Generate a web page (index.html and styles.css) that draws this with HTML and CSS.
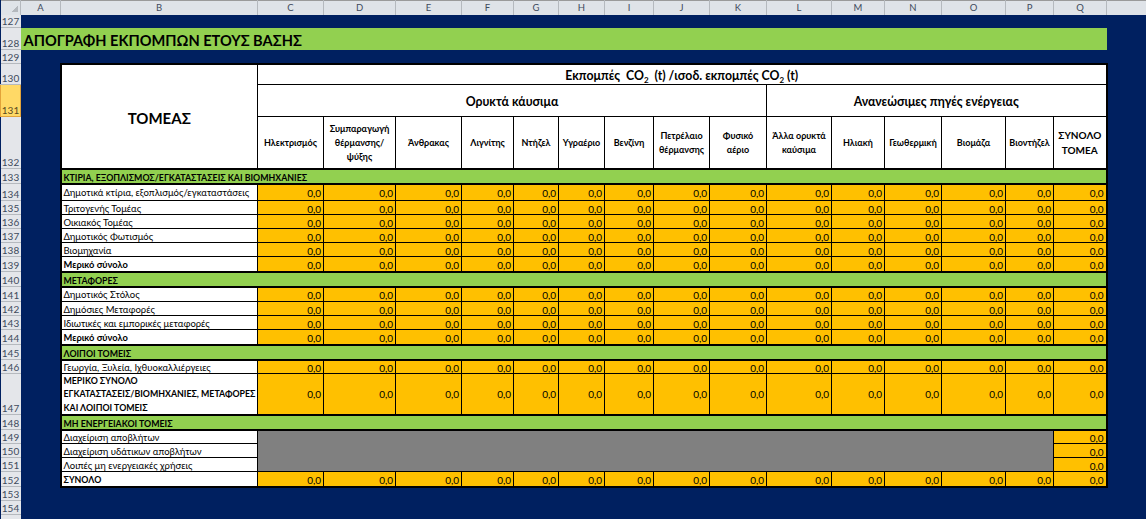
FILE: index.html
```html
<!DOCTYPE html>
<html lang="el">
<head>
<meta charset="utf-8">
<title>Απογραφή εκπομπών</title>
<link rel="stylesheet" href="styles.css">
</head>
<body>
<table class="sheet">
<colgroup><col class="w20"><col class="w40"><col class="w197"><col class="w66"><col class="w72"><col class="w66"><col class="w52"><col class="w45"><col class="w46"><col class="w49"><col class="w56"><col class="w57"><col class="w65"><col class="w53"><col class="w57"><col class="w64"><col class="w48"><col class="w53"><col class="w40"></colgroup>
<tr class="h14"><th class="corner"></th><th class="ch">A</th><th class="ch">B</th><th class="ch">C</th><th class="ch">D</th><th class="ch">E</th><th class="ch">F</th><th class="ch">G</th><th class="ch">H</th><th class="ch">I</th><th class="ch">J</th><th class="ch">K</th><th class="ch">L</th><th class="ch">M</th><th class="ch">N</th><th class="ch">O</th><th class="ch">P</th><th class="ch">Q</th><th class="ch"></th></tr>
<tr class="h13"><th class="rh">127</th><td colspan="18"></td></tr>
<tr class="h22"><th class="rh">128</th><td colspan="17" class="banner">ΑΠΟΓΡΑΦΗ ΕΚΠΟΜΠΩΝ ΕΤΟΥΣ ΒΑΣΗΣ</td><td></td></tr>
<tr class="h14"><th class="rh">129</th><td colspan="18"></td></tr>
<tr class="h21"><th class="rh">130</th><td></td><td rowspan="3" class="sector">ΤΟΜΕΑΣ</td><td colspan="15" class="unit br">Εκπομπές&nbsp; CO<sub>2</sub>&nbsp; (t) /ισοδ. εκπομπές CO<sub>2</sub> (t)</td><td></td></tr>
<tr class="h32"><th class="rh sel">131</th><td></td><td colspan="9" class="group">Ορυκτά κάυσιμα</td><td colspan="6" class="group br">Ανανεώσιμες πηγές ενέργειας</td><td></td></tr>
<tr class="h52"><th class="rh">132</th><td></td><td class="fuel">Ηλεκτρισμός</td><td class="fuel">Συμπαραγωγή<br>θέρμανσης/<br>ψύξης</td><td class="fuel">Άνθρακας</td><td class="fuel">Λιγνίτης</td><td class="fuel">Ντήζελ</td><td class="fuel">Υγραέριο</td><td class="fuel">Βενζίνη</td><td class="fuel">Πετρέλαιο<br>θέρμανσης</td><td class="fuel">Φυσικό<br>αέριο</td><td class="fuel">Άλλα ορυκτά<br>καύσιμα</td><td class="fuel">Ηλιακή</td><td class="fuel">Γεωθερμική</td><td class="fuel">Βιομάζα</td><td class="fuel">Βιοντήζελ</td><td class="fuel total br">ΣΥΝΟΛΟ<br>ΤΟΜΕΑ</td><td></td></tr>
<tr class="h15"><th class="rh">133</th><td></td><td colspan="16" class="section">ΚΤΙΡΙΑ, ΕΞΟΠΛΙΣΜΟΣ/ΕΓΚΑΤΑΣΤΑΣΕΙΣ ΚΑΙ ΒΙΟΜΗΧΑΝΙΕΣ</td><td></td></tr>
<tr class="h17"><th class="rh">134</th><td></td><td class="name">Δημοτικά κτίρια, εξοπλισμός/εγκαταστάσεις</td><td class="v">0,0</td><td class="v">0,0</td><td class="v">0,0</td><td class="v">0,0</td><td class="v">0,0</td><td class="v">0,0</td><td class="v">0,0</td><td class="v">0,0</td><td class="v">0,0</td><td class="v">0,0</td><td class="v">0,0</td><td class="v">0,0</td><td class="v">0,0</td><td class="v">0,0</td><td class="v br">0,0</td><td></td></tr>
<tr class="h14"><th class="rh">135</th><td></td><td class="name">Τριτογενής Τομέας</td><td class="v">0,0</td><td class="v">0,0</td><td class="v">0,0</td><td class="v">0,0</td><td class="v">0,0</td><td class="v">0,0</td><td class="v">0,0</td><td class="v">0,0</td><td class="v">0,0</td><td class="v">0,0</td><td class="v">0,0</td><td class="v">0,0</td><td class="v">0,0</td><td class="v">0,0</td><td class="v br">0,0</td><td></td></tr>
<tr class="h14"><th class="rh">136</th><td></td><td class="name">Οικιακός Τομέας</td><td class="v">0,0</td><td class="v">0,0</td><td class="v">0,0</td><td class="v">0,0</td><td class="v">0,0</td><td class="v">0,0</td><td class="v">0,0</td><td class="v">0,0</td><td class="v">0,0</td><td class="v">0,0</td><td class="v">0,0</td><td class="v">0,0</td><td class="v">0,0</td><td class="v">0,0</td><td class="v br">0,0</td><td></td></tr>
<tr class="h14"><th class="rh">137</th><td></td><td class="name">Δημοτικός Φωτισμός</td><td class="v">0,0</td><td class="v">0,0</td><td class="v">0,0</td><td class="v">0,0</td><td class="v">0,0</td><td class="v">0,0</td><td class="v">0,0</td><td class="v">0,0</td><td class="v">0,0</td><td class="v">0,0</td><td class="v">0,0</td><td class="v">0,0</td><td class="v">0,0</td><td class="v">0,0</td><td class="v br">0,0</td><td></td></tr>
<tr class="h14"><th class="rh">138</th><td></td><td class="name">Βιομηχανία</td><td class="v">0,0</td><td class="v">0,0</td><td class="v">0,0</td><td class="v">0,0</td><td class="v">0,0</td><td class="v">0,0</td><td class="v">0,0</td><td class="v">0,0</td><td class="v">0,0</td><td class="v">0,0</td><td class="v">0,0</td><td class="v">0,0</td><td class="v">0,0</td><td class="v">0,0</td><td class="v br">0,0</td><td></td></tr>
<tr class="h15"><th class="rh">139</th><td></td><td class="name b">Μερικό σύνολο</td><td class="v">0,0</td><td class="v">0,0</td><td class="v">0,0</td><td class="v">0,0</td><td class="v">0,0</td><td class="v">0,0</td><td class="v">0,0</td><td class="v">0,0</td><td class="v">0,0</td><td class="v">0,0</td><td class="v">0,0</td><td class="v">0,0</td><td class="v">0,0</td><td class="v">0,0</td><td class="v br">0,0</td><td></td></tr>
<tr class="h15"><th class="rh">140</th><td></td><td colspan="16" class="section">ΜΕΤΑΦΟΡΕΣ</td><td></td></tr>
<tr class="h15"><th class="rh">141</th><td></td><td class="name">Δημοτικός Στόλος</td><td class="v">0,0</td><td class="v">0,0</td><td class="v">0,0</td><td class="v">0,0</td><td class="v">0,0</td><td class="v">0,0</td><td class="v">0,0</td><td class="v">0,0</td><td class="v">0,0</td><td class="v">0,0</td><td class="v">0,0</td><td class="v">0,0</td><td class="v">0,0</td><td class="v">0,0</td><td class="v br">0,0</td><td></td></tr>
<tr class="h14"><th class="rh">142</th><td></td><td class="name">Δημόσιες Μεταφορές</td><td class="v">0,0</td><td class="v">0,0</td><td class="v">0,0</td><td class="v">0,0</td><td class="v">0,0</td><td class="v">0,0</td><td class="v">0,0</td><td class="v">0,0</td><td class="v">0,0</td><td class="v">0,0</td><td class="v">0,0</td><td class="v">0,0</td><td class="v">0,0</td><td class="v">0,0</td><td class="v br">0,0</td><td></td></tr>
<tr class="h14"><th class="rh">143</th><td></td><td class="name">Ιδιωτικές και εμπορικές μεταφορές</td><td class="v">0,0</td><td class="v">0,0</td><td class="v">0,0</td><td class="v">0,0</td><td class="v">0,0</td><td class="v">0,0</td><td class="v">0,0</td><td class="v">0,0</td><td class="v">0,0</td><td class="v">0,0</td><td class="v">0,0</td><td class="v">0,0</td><td class="v">0,0</td><td class="v">0,0</td><td class="v br">0,0</td><td></td></tr>
<tr class="h15"><th class="rh">144</th><td></td><td class="name b">Μερικό σύνολο</td><td class="v">0,0</td><td class="v">0,0</td><td class="v">0,0</td><td class="v">0,0</td><td class="v">0,0</td><td class="v">0,0</td><td class="v">0,0</td><td class="v">0,0</td><td class="v">0,0</td><td class="v">0,0</td><td class="v">0,0</td><td class="v">0,0</td><td class="v">0,0</td><td class="v">0,0</td><td class="v br">0,0</td><td></td></tr>
<tr class="h15"><th class="rh">145</th><td></td><td colspan="16" class="section">ΛΟΙΠΟΙ ΤΟΜΕΙΣ</td><td></td></tr>
<tr class="h14"><th class="rh">146</th><td></td><td class="name">Γεωργία, Ξυλεία, Ιχθυοκαλλιέργειες</td><td class="v">0,0</td><td class="v">0,0</td><td class="v">0,0</td><td class="v">0,0</td><td class="v">0,0</td><td class="v">0,0</td><td class="v">0,0</td><td class="v">0,0</td><td class="v">0,0</td><td class="v">0,0</td><td class="v">0,0</td><td class="v">0,0</td><td class="v">0,0</td><td class="v">0,0</td><td class="v br">0,0</td><td></td></tr>
<tr class="h41"><th class="rh">147</th><td></td><td class="name b upper tall">ΜΕΡΙΚΟ ΣΥΝΟΛΟ<br>ΕΓΚΑΤΑΣΤΑΣΕΙΣ/ΒΙΟΜΗΧΑΝΙΕΣ, ΜΕΤΑΦΟΡΕΣ<br>ΚΑΙ ΛΟΙΠΟΙ ΤΟΜΕΙΣ</td><td class="v">0,0</td><td class="v">0,0</td><td class="v">0,0</td><td class="v">0,0</td><td class="v">0,0</td><td class="v">0,0</td><td class="v">0,0</td><td class="v">0,0</td><td class="v">0,0</td><td class="v">0,0</td><td class="v">0,0</td><td class="v">0,0</td><td class="v">0,0</td><td class="v">0,0</td><td class="v br">0,0</td><td></td></tr>
<tr class="h15"><th class="rh">148</th><td></td><td colspan="16" class="section">ΜΗ ΕΝΕΡΓΕΙΑΚΟΙ ΤΟΜΕΙΣ</td><td></td></tr>
<tr class="h14"><th class="rh">149</th><td></td><td class="name">Διαχείριση αποβλήτων</td><td colspan="14" rowspan="3" class="na"></td><td class="v br">0,0</td><td></td></tr>
<tr class="h14"><th class="rh">150</th><td></td><td class="name">Διαχείριση υδάτικων αποβλήτων</td><td class="v br">0,0</td><td></td></tr>
<tr class="h14"><th class="rh">151</th><td></td><td class="name">Λοιπές μη ενεργειακές χρήσεις</td><td class="v br">0,0</td><td></td></tr>
<tr class="h15 last"><th class="rh">152</th><td></td><td class="name b upper">ΣΥΝΟΛΟ</td><td class="v">0,0</td><td class="v">0,0</td><td class="v">0,0</td><td class="v">0,0</td><td class="v">0,0</td><td class="v">0,0</td><td class="v">0,0</td><td class="v">0,0</td><td class="v">0,0</td><td class="v">0,0</td><td class="v">0,0</td><td class="v">0,0</td><td class="v">0,0</td><td class="v">0,0</td><td class="v br">0,0</td><td></td></tr>
<tr class="h14"><th class="rh">153</th><td colspan="18"></td></tr>
<tr class="h14"><th class="rh">154</th><td colspan="18"></td></tr>
<tr class="h14"><th class="rh"></th><td colspan="18"></td></tr>
</table>
</body>
</html>
```
FILE: styles.css
```css
html, body { margin: 0; padding: 0; height: 100%; overflow: hidden; background: #002060; }
.sheet {
  border-collapse: collapse;
  table-layout: fixed;
  width: 1146px;
  font-family: Lato, "Noto Sans", sans-serif;
  font-size: 10px;
  line-height: 12px;
  color: #000;
}
th, td { padding: 0; overflow: hidden; }
.w20 { width: 20px; } .w40 { width: 40px; } .w197 { width: 197px; } .w66 { width: 66px; }
.w72 { width: 72px; } .w52 { width: 52px; } .w45 { width: 45px; } .w46 { width: 46px; }
.w49 { width: 49px; } .w56 { width: 56px; } .w57 { width: 57px; } .w65 { width: 65px; }
.w53 { width: 53px; } .w64 { width: 64px; } .w48 { width: 48px; }
.h13 { height: 13px; } .h14 { height: 14px; } .h15 { height: 15px; } .h17 { height: 17px; }
.h21 { height: 21px; } .h22 { height: 22px; } .h32 { height: 32px; } .h41 { height: 41px; } .h52 { height: 52px; }

.corner {
  background: linear-gradient(135deg, transparent 50%, #b4b8bd 50%) no-repeat 11px 5px / 6px 6px, #dfe3e8;
  border-right: 1px solid #b5b9be;
  border-top: 1px solid #9a9a9a;
}
.ch { background: #dfe3e8; border-right: 1px solid #b5b9be; border-top: 1px solid #9a9a9a; color: #3e4a5c; font-weight: 400; font-size: 9.5px; line-height: 12px; }
.rh { background: #e4e6ea; border-bottom: 1px solid #b5b9be; color: #3e4a5c; font-weight: 400; font-size: 10px; vertical-align: bottom; line-height: 11px; }
.rh.sel { background: #ffd966; border: 1px solid #e2a33a; color: #5a4a20; }

.banner { background: #92d050; font-size: 14.6px; font-weight: 700; padding: 3px 0 0 3px; line-height: 17px; }
.sector, .unit, .group, .fuel, .name, .section, .v { border: 1px solid #000; }
.sector { background: #fff; text-align: center; font-size: 15px; font-weight: 700; padding-top: 4px; border-width: 2px; border-right-width: 1px; }
.unit { background: #fff; text-align: center; font-size: 12.3px; font-weight: 700; padding-top: 4px; line-height: 14px; border-top-width: 2px; }
.unit sub { font-size: 8px; line-height: 0; }
.group { background: #fff; text-align: center; font-size: 12.3px; font-weight: 700; padding-top: 2px; }
.fuel { background: #fff; text-align: center; font-size: 9px; font-weight: 700; padding-top: 2px; line-height: 14px; border-bottom-width: 2px; }
.total { font-size: 10px; line-height: 15px; }
.section { background: #92d050; font-size: 8.8px; font-weight: 700; padding: 3px 0 0 2px; line-height: 9px; border-width: 2px; }
.name { background: #fff; border-left-width: 2px; padding: 2px 0 0 2px; line-height: 10px; font-size: 9.5px; white-space: nowrap; }
.name.b { font-size: 9.3px; font-weight: 700; }
.name.upper { font-size: 8.8px; }
.name.tall { padding-top: 0; line-height: 13.3px; }
.v { background: #ffc000; text-align: right; padding: 2px 2px 0 0; line-height: 10px; font-size: 10px; }
.h41 .v { padding-top: 0; line-height: 12px; }
.na { background: #808080; }
.br { border-right-width: 2px; }
.last .name, .last .v { border-bottom-width: 2px; }
```
